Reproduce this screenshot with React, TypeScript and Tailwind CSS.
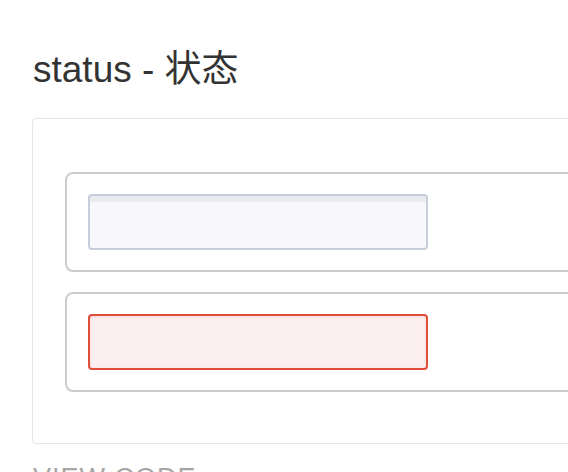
import React from "react";

export default function App() {
  return (
    <div
      className="w-[568px] h-[472px] overflow-hidden bg-white pl-[32px] pt-[51px]"
      style={{ fontFamily: '"Liberation Sans", "Noto Sans CJK SC", sans-serif' }}
    >
      <h1 className="h-[37px] text-[37px] leading-[37px] text-[#333333] font-normal whitespace-nowrap ml-[1px]">
        status - 状态
      </h1>
      <div className="mt-[30px] w-[640px] border border-[#e6e6e6] rounded-[4px] pt-[53px] pb-[51px] pl-[32px] flex flex-col gap-[20px]">
        <div className="w-[620px] border-2 border-[#cdcdcd] rounded-[8px] p-[20px]">
          <div className="w-[340px] ml-[1px] h-[56px] rounded-[4px] border-2 border-[#c8cedc] bg-[#f8f8fa] shadow-[inset_0_6px_0_#ebebef]" />
        </div>
        <div className="w-[620px] border-2 border-[#cdcdcd] rounded-[8px] p-[20px]">
          <div className="w-[340px] ml-[1px] h-[56px] rounded-[4px] border-2 border-[#e04e3c] bg-[#fcefef] shadow-[inset_0_1px_3px_rgba(224,78,60,0.15)]" />
        </div>
      </div>
      <div className="mt-[21px] text-[27px] leading-none text-[#a6a6a6] tracking-[1px] ml-[1px] whitespace-nowrap">
        VIEW CODE
      </div>
    </div>
  );
}
